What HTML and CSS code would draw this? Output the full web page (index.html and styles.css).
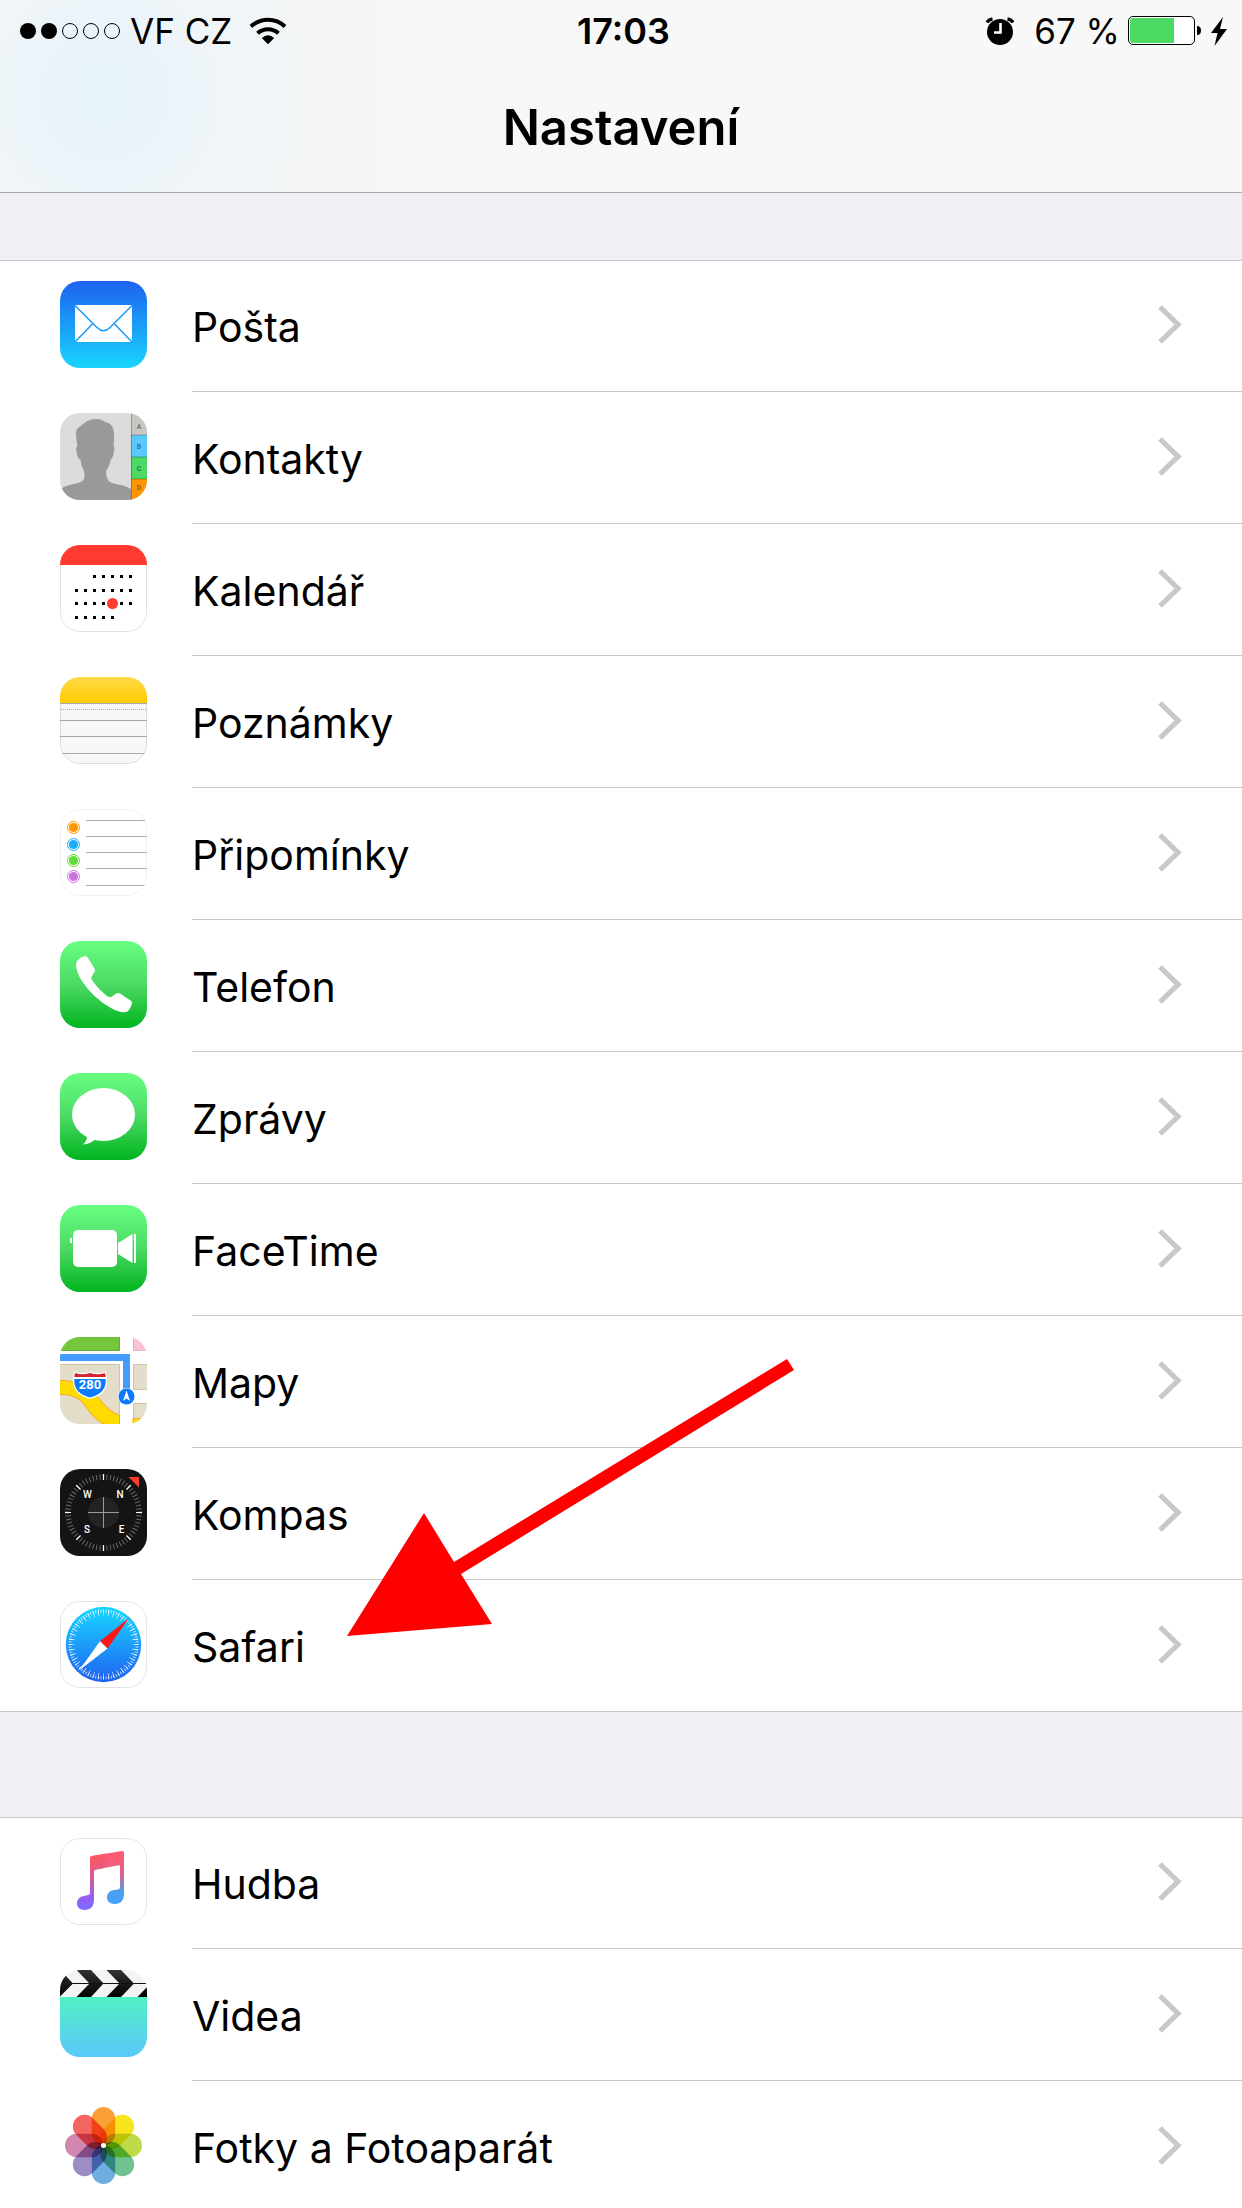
FILE: index.html
```html
<!DOCTYPE html>
<html lang="cs">
<head>
<meta charset="utf-8">
<meta name="viewport" content="width=device-width, initial-scale=1">
<title>Nastavení</title>
<link rel="stylesheet" href="styles.css">
</head>
<body>
<svg class="defs" width="0" height="0" aria-hidden="true">
  <defs>
    <linearGradient id="mail" x2="0" y2="1"><stop offset="0" stop-color="#1d62f0"/><stop offset="1" stop-color="#19d5fd"/></linearGradient>
    <linearGradient id="green" x2="0" y2="1"><stop offset="0" stop-color="#67ff81"/><stop offset=".5" stop-color="#4cd964"/><stop offset="1" stop-color="#01b41f"/></linearGradient>
    <linearGradient id="yellow" x2="0" y2="1"><stop offset="0" stop-color="#ffd94a"/><stop offset="1" stop-color="#ffcc00"/></linearGradient>
    <linearGradient id="safari" x2="0" y2="1"><stop offset="0" stop-color="#19d7ff"/><stop offset="1" stop-color="#1e62f0"/></linearGradient>
    <linearGradient id="noteTop" gradientUnits="userSpaceOnUse" x1="45" y1="16" x2="45" y2="66"><stop offset=".1" stop-color="#fb5c74" /><stop offset=".4" stop-color="#d9608f"/><stop offset=".75" stop-color="#4aa0ee"/><stop offset="1" stop-color="#42a1ff"/></linearGradient>
    <linearGradient id="noteLeft" gradientUnits="userSpaceOnUse" x1="28" y1="16" x2="32" y2="72"><stop offset=".05" stop-color="#ff5763"/><stop offset=".4" stop-color="#d95c93"/><stop offset=".8" stop-color="#9160fa"/><stop offset="1" stop-color="#7672ff"/></linearGradient>
    <linearGradient id="clapper" x2="0" y2="1"><stop offset="0" stop-color="#333"/><stop offset="1" stop-color="#000"/></linearGradient>
    <linearGradient id="slate" x2="0" y2="1"><stop offset="0" stop-color="#52f0c4"/><stop offset="1" stop-color="#5ac8fb"/></linearGradient>
    <symbol id="chevron" viewBox="0 0 24 39"><path d="M2 2 20 19.500 2 37" fill="none" stroke="#c7c7cc" stroke-width="5.200"/></symbol>
    <rect id="petal" x="31.800" y="5" width="23.400" height="38.500" rx="11.700"/>
  </defs>
</svg>

<header class="navbar">
  <div class="status">
    <div class="status-left">
      <svg width="100" height="16" viewBox="0 0 100 16" role="img" aria-label="Signál"><circle cx="8" cy="8" r="8"/><circle cx="29" cy="8" r="8"/><g fill="none" stroke="#000"><circle cx="50" cy="8" r="7.500"/><circle cx="71" cy="8" r="7.500"/><circle cx="92" cy="8" r="7.500"/></g></svg>
      <span class="carrier">VF CZ</span>
      <svg class="wifi" width="38" height="28" viewBox="0 0 38 28" role="img" aria-label="Wi-Fi"><g fill="none" stroke="#000" stroke-width="4"><path d="M2 9.500A24.500 24.500 0 0 1 36 9.500"/><path d="M8.500 16.300A15.500 15.500 0 0 1 29.500 16.300"/></g><path d="M12.800 21Q19 15.500 25.200 21L19 27.200Z"/></svg>
    </div>
    <time class="clock">17:03</time>
    <div class="status-right">
      <svg width="28" height="28" viewBox="0 0 28 28" role="img" aria-label="Budík"><circle cx="14" cy="15" r="13"/><g fill="none" stroke="#000" stroke-width="3.500"><path d="M1 5.500Q2.500 2.500 6.500 2"/><path d="M27 5.500Q25.500 2.500 21.500 2"/></g><path d="M14.500 6V15.500H8" fill="none" stroke="#fff" stroke-width="2.600"/></svg>
      <span class="percent">67 %</span>
      <svg width="74" height="30" viewBox="0 0 74 30" role="img" aria-label="Baterie"><rect x=".5" y=".5" width="66" height="28" rx="4.500" fill="#fff" stroke="#000"/><path d="M46 2V27H5Q2 27 2 24V5Q2 2 5 2Z" fill="#4cd964"/><path d="M69 10Q73 10 73 14.500T69 19Z"/></svg>
      <svg class="bolt" width="16" height="29" viewBox="0 0 16 29" role="img" aria-label="Nabíjení"><path d="M12 0 0 16H6.500L3.500 29 16 12H9Z"/></svg>
    </div>
  </div>
  <h1 class="title">Nastavení</h1>
</header>

<main class="settings">
  <ul class="group">
    <li class="row"><a class="link" href="#posta">
      <svg class="icon" viewBox="0 0 87 87" aria-hidden="true"><rect width="87" height="87" fill="url(#mail)"/><rect x="15" y="24" width="57" height="37" fill="#fff"/><g fill="none" stroke="#1f9cf7" stroke-width="1.600"><path d="M15 24.500 37 46.500Q43.500 53 50 46.500L72 24.500"/><path d="M15 61 32.500 43M72 61 54.500 43"/></g></svg>
      <span class="body"><span class="label">Pošta</span><svg class="chevron" aria-hidden="true"><use href="#chevron"/></svg></span></a></li>
    <li class="row"><a class="link" href="#kontakty">
      <svg class="icon" viewBox="0 0 87 87" aria-hidden="true"><rect width="87" height="87" fill="#dcdcdc"/><path d="M1 87V76C8 70 21 72 24 66Q25 61 24 58Q21 53 20.500 47Q17 46 16 35L17.500 33Q16 27 16 20C16 15 20 14 23 11Q29 6 36 6Q42 6 45 9Q51 10 53 15Q55 21 53.500 33L54.500 35Q53 46 50.500 47Q50 53 46 58Q46 64 48.500 68C53 72 64 71 71 76V87Z" fill="#999"/><rect x="71" width="16" height="22" fill="#c9c7c1"/><rect x="71" y="22" width="16" height="22" fill="#5ac8fa"/><rect x="71" y="44" width="16" height="22" fill="#4cd964"/><rect x="71" y="66" width="16" height="21" fill="#ff9500"/><path d="M71 22H87M71 44H87M71 66H87M71.500 0V87" stroke="#000" stroke-opacity=".25"/><g class="tab-text"><text x="79" y="16">A</text><text x="79" y="36">B</text><text x="79" y="58">C</text><text x="79" y="77">D</text></g></svg>
      <span class="body"><span class="label">Kontakty</span><svg class="chevron" aria-hidden="true"><use href="#chevron"/></svg></span></a></li>
    <li class="row"><a class="link" href="#kalendar">
      <svg class="icon" viewBox="0 0 87 87" aria-hidden="true"><rect x=".5" y=".5" width="86" height="86" rx="19.500" fill="#fff" stroke="#e0e0e0"/><rect width="87" height="20" fill="#ff3b30"/><g stroke="#000" stroke-width="3" stroke-dasharray="3 6"><path d="M33 31.500H72"/><path d="M15 45.500H72"/><path d="M15 58.500H72"/><path d="M15 72.500H54"/></g><circle cx="52.500" cy="58.500" r="5.500" fill="#ff3b30"/></svg>
      <span class="body"><span class="label">Kalendář</span><svg class="chevron" aria-hidden="true"><use href="#chevron"/></svg></span></a></li>
    <li class="row"><a class="link" href="#poznamky">
      <svg class="icon" viewBox="0 0 87 87" aria-hidden="true"><rect x=".5" y=".5" width="86" height="86" rx="19.500" fill="#f8f8f8" stroke="#dcdcdc"/><rect width="87" height="26" fill="url(#yellow)"/><path d="M0 26.500H87M0 43.500H87M0 59.500H87M2 76.500H85" stroke="#a8a8a8"/><path d="M1 32.500H87" stroke="#aaa" stroke-dasharray="1 1"/></svg>
      <span class="body"><span class="label">Poznámky</span><svg class="chevron" aria-hidden="true"><use href="#chevron"/></svg></span></a></li>
    <li class="row"><a class="link" href="#pripominky">
      <svg class="icon" viewBox="0 0 87 87" aria-hidden="true"><rect x=".5" y=".5" width="86" height="86" rx="19.500" fill="#fff" stroke="#f0f0f0"/><path d="M26 11.500H85M26 27.500H87M26 43.500H87M26 59.500H87M26 76.500H85" stroke="#acacac"/><g stroke-width="1" fill="none"><circle cx="13.500" cy="18.500" r="6" stroke="#ff9500"/><circle cx="13.500" cy="35.500" r="6" stroke="#1badf8"/><circle cx="13.500" cy="51.500" r="6" stroke="#63da38"/><circle cx="13.500" cy="67.500" r="6" stroke="#cc73e1"/></g><circle cx="13.500" cy="18.500" r="4.600" fill="#ff9500"/><circle cx="13.500" cy="35.500" r="4.600" fill="#1badf8"/><circle cx="13.500" cy="51.500" r="4.600" fill="#63da38"/><circle cx="13.500" cy="67.500" r="4.600" fill="#cc73e1"/></svg>
      <span class="body"><span class="label">Připomínky</span><svg class="chevron" aria-hidden="true"><use href="#chevron"/></svg></span></a></li>
    <li class="row"><a class="link" href="#telefon">
      <svg class="icon" viewBox="0 0 87 87" aria-hidden="true"><rect width="87" height="87" fill="url(#green)"/><path d="M16 23Q17 17 25 15Q27 15 28 17L34.500 27.500Q35.500 29 34.500 31L31.500 36Q31 38 32 39Q38 48 47 55Q50 57 52 55.500L56 52.500Q58 51.500 60 52.500L70.500 59.500Q73 61 71.500 64Q69.500 70 66 71Q59 72 51 67Q33 57 22 40Q16 31 16 23Z" fill="#fff"/></svg>
      <span class="body"><span class="label">Telefon</span><svg class="chevron" aria-hidden="true"><use href="#chevron"/></svg></span></a></li>
    <li class="row"><a class="link" href="#zpravy">
      <svg class="icon" viewBox="0 0 87 87" aria-hidden="true"><rect width="87" height="87" fill="url(#green)"/><ellipse cx="43.500" cy="41.500" rx="31.500" ry="26.500" fill="#fff"/><path d="M26 61Q29 66 23 71.500Q30 71 36 66Z" fill="#fff"/></svg>
      <span class="body"><span class="label">Zprávy</span><svg class="chevron" aria-hidden="true"><use href="#chevron"/></svg></span></a></li>
    <li class="row"><a class="link" href="#facetime">
      <svg class="icon" viewBox="0 0 87 87" aria-hidden="true"><rect width="87" height="87" fill="url(#green)"/><g fill="#fff"><rect x="13" y="25" width="44" height="37" rx="5"/><path d="M58 38 72.500 29V58L58 49Z"/><rect x="74" y="29" width="2" height="29"/><rect x="10" y="33" width="2" height="5"/></g></svg>
      <span class="body"><span class="label">FaceTime</span><svg class="chevron" aria-hidden="true"><use href="#chevron"/></svg></span></a></li>
    <li class="row"><a class="link" href="#mapy">
      <svg class="icon" viewBox="0 0 87 87" aria-hidden="true"><rect width="87" height="87" fill="#fff"/><g stroke="#cbc5ad"><path d="M-1 27.500H59.500V88H-1Z" fill="#e4ddca"/><path d="M73.500 27.500H88V52.500H73.500ZM73.500 66.500H88V88H73.500Z" fill="#e4ddca"/></g><path d="M-1 0H59.500V13.500H-1Z" fill="#76c63c" stroke="#5fae36"/><path d="M73.500-1H88V13.500H73.500Z" fill="#fbc3d1" stroke="#e6b4bf"/><path d="M-1 43.500C22 43 33 54 42 65Q50 75 59.500 78.500V88H46C33 83 27 70 20 63Q12 57-1 57.500ZM73 81.500Q78 82 82 81.500H87V84L80 88H73Z" fill="#ffdc00" stroke="#f5a623"/><path d="M0 20.500H66.500V55" fill="none" stroke="#439aff" stroke-width="7"/><path d="M15 34.500Q22 37.500 30 34.500Q38 37.500 45 34.500Q48 39 47 45Q46 58 30 62Q14 58 13 45Q12 39 15 34.500Z" fill="#fff"/><path d="M15.500 36Q22 38.500 30 36Q38 38.500 44.500 36Q46 38 45.700 40H14.300Q14 38 15.500 36Z" fill="#d5232f"/><path d="M14.300 42H45.700Q47 56 30 60.500Q13 56 14.300 42Z" fill="#0b7bff"/><text class="shield-text" x="30" y="52">280</text><circle cx="66.500" cy="59.500" r="8.800" fill="#fff" opacity=".7"/><circle cx="66.500" cy="59.500" r="8" fill="#0b7bff"/><path d="M66.500 53.500 70 64 66.500 61.500 63 64Z" fill="#fff"/></svg>
      <span class="body"><span class="label">Mapy</span><svg class="chevron" aria-hidden="true"><use href="#chevron"/></svg></span></a></li>
    <li class="row"><a class="link" href="#kompas">
      <svg class="icon" viewBox="0 0 87 87" aria-hidden="true"><rect width="87" height="87" fill="#141414"/><circle cx="43.500" cy="43.500" r="15.500" fill="#232323"/><path d="M43.500 28V59M28 43.500H59" stroke="#9a9a9e"/><g fill="none"><circle cx="43.500" cy="43.500" r="35.500" stroke="#777" stroke-width="5.500" pathLength="64" stroke-dasharray=".24 .76" stroke-dashoffset=".12"/><circle cx="43.500" cy="43.500" r="35.500" stroke="#fff" stroke-width="6" pathLength="80" stroke-dasharray=".46 9.540" stroke-dashoffset=".23"/></g><path d="M68.500 8H79V18.500Z" fill="#ff3b30"/><g class="compass-text"><text x="27.500" y="29">W</text><text x="60" y="29">N</text><text x="27" y="64">S</text><text x="61.500" y="64">E</text></g></svg>
      <span class="body"><span class="label">Kompas</span><svg class="chevron" aria-hidden="true"><use href="#chevron"/></svg></span></a></li>
    <li class="row"><a class="link" href="#safari">
      <svg class="icon" viewBox="0 0 87 87" aria-hidden="true"><rect x=".5" y=".5" width="86" height="86" rx="19.500" fill="#fff" stroke="#e2e2e2"/><circle cx="43.500" cy="43.500" r="37.700" fill="url(#safari)"/><g fill="none" stroke="#fff"><circle cx="43.500" cy="43.500" r="33.500" stroke-width="3" stroke-opacity=".8" pathLength="80" stroke-dasharray=".32 .68" stroke-dashoffset=".16"/><circle cx="43.500" cy="43.500" r="32" stroke-width="6" stroke-opacity=".8" pathLength="40" stroke-dasharray=".16 .84" stroke-dashoffset=".08"/></g><path d="M69 17 40 40.300 47.500 47.500Z" fill="#ff1515"/><path d="M19 69.500 40 40.300 47.500 47.500Z" fill="#fff"/></svg>
      <span class="body"><span class="label">Safari</span><svg class="chevron" aria-hidden="true"><use href="#chevron"/></svg></span></a>
      <svg class="pointer" width="448" height="278" viewBox="0 0 448 278" aria-hidden="true"><path d="M0 278 77 155 107 204 440 1 447 12 114 216 145 266Z" fill="#f00"/></svg>
    </li>
  </ul>

  <ul class="group">
    <li class="row"><a class="link" href="#hudba">
      <svg class="icon" viewBox="0 0 87 87" aria-hidden="true"><rect x=".5" y=".5" width="86" height="86" rx="19.500" fill="#fff" stroke="#e2e2e2"/><path d="M30 32V20Q30 18.500 32 18L62 13Q64 12.700 64 15V55Q64 66 54.500 66Q47 66 47 59.500Q47 53 54 52L58 51.500Q60 51 60 49V28.500Q60 27 58.500 27.300L34 32Z" fill="url(#noteTop)"/><path d="M30 20Q30 18.500 32 18L46 15.500 44 30 35.500 31.600Q34 32 34 33.500V61Q34 72 24.500 72Q17 72 17 65.500Q17 59 24 58L28 57Q30 56.500 30 55Z" fill="url(#noteLeft)"/></svg>
      <span class="body"><span class="label">Hudba</span><svg class="chevron" aria-hidden="true"><use href="#chevron"/></svg></span></a></li>
    <li class="row"><a class="link" href="#videa">
      <svg class="icon" viewBox="0 0 87 87" aria-hidden="true"><rect width="87" height="27" fill="#f4f4f4"/><path d="M5 5 13 13.500 0 26.500V13ZM16.500 0H31L43.500 13.500 31 27H16.500L29.500 13.500ZM46.500 0H61L74 13.500 61 27H46.500L59.500 13.500ZM77.500 27 87 17V27Z" fill="url(#clapper)"/><path d="M12 13.500H86" stroke="#111"/><rect y="27" width="87" height="60" fill="url(#slate)"/></svg>
      <span class="body"><span class="label">Videa</span><svg class="chevron" aria-hidden="true"><use href="#chevron"/></svg></span></a></li>
    <li class="row"><a class="link" href="#fotky">
      <svg class="icon photos" viewBox="0 0 87 87" aria-hidden="true"><use href="#petal" fill="#fba036"/><use href="#petal" fill="#f8e41c" transform="rotate(45 43.500 43.500)"/><use href="#petal" fill="#bfdc48" transform="rotate(90 43.500 43.500)"/><use href="#petal" fill="#6fc391" transform="rotate(135 43.500 43.500)"/><use href="#petal" fill="#6eaee0" transform="rotate(180 43.500 43.500)"/><use href="#petal" fill="#9c8dc5" transform="rotate(225 43.500 43.500)"/><use href="#petal" fill="#d288ae" transform="rotate(270 43.500 43.500)"/><use href="#petal" fill="#f5655f" transform="rotate(315 43.500 43.500)"/><circle class="core" cx="43.500" cy="43.500" r="2.500" fill="#fff"/></svg>
      <span class="body"><span class="label">Fotky a Fotoaparát</span><svg class="chevron" aria-hidden="true"><use href="#chevron"/></svg></span></a></li>
  </ul>
</main>
</body>
</html>
```
FILE: styles.css
```css
* {
  box-sizing: border-box;
}

html {
  scrollbar-width: none;
}

body {
  margin: 0;
  background: #efeff4;
  color: #000;
  font-family: Inter, "Liberation Sans", sans-serif;
  font-size: 41px;
}

svg {
  display: block;
  flex: none;
}

.defs {
  position: absolute;
}

.navbar {
  border-bottom: 1px solid #a7a7ab;
  background:
    radial-gradient(circle at 105px 95px, #e7f3fa 0, #ebf3fa 60px, #eff5f8 120px, rgba(245, 246, 247, 0) 240px),
    linear-gradient(90deg, #f3f7f9, #f5f5f5 240px, #f8f8f8 700px);
}

.status {
  display: grid;
  grid-template-columns: 1fr auto 1fr;
  align-items: center;
  height: 62px;
  padding: 0 15px 0 20px;
  font-size: 35px;
  line-height: 62px;
}

.status-left,
.status-right {
  display: flex;
  align-items: center;
}

.status-right {
  justify-content: flex-end;
}

.carrier {
  margin: 0 17px 0 10px;
}

.clock {
  font-size: 36px;
  font-weight: 600;
}

.percent {
  margin: 0 8px 0 20px;
}

.bolt {
  margin-left: 9px;
}

.title {
  margin: 0;
  padding-top: 2px;
  font-size: 49px;
  font-weight: 600;
  line-height: 128px;
  text-align: center;
}

.settings {
  display: flex;
  flex-direction: column;
  gap: 105px;
  padding-top: 67px;
}

.group {
  margin: 0;
  padding: 0;
  list-style: none;
  background: #fff;
  box-shadow: inset 0 1px #c8c7cc, inset 0 -1px #c8c7cc;
}

.row {
  position: relative;
}

.link {
  display: flex;
  align-items: flex-start;
  gap: 45px;
  padding-left: 60px;
  color: inherit;
  text-decoration: none;
}

.icon {
  width: 87px;
  height: 87px;
  margin-top: 21px;
  border-radius: 20px;
  overflow: hidden;
}

.body {
  display: flex;
  flex: 1;
  align-items: center;
  justify-content: space-between;
  min-height: 132px;
  padding-right: 60px;
  padding-bottom: 2px;
  border-bottom: 1px solid #c8c7cc;
}

.row:last-child .body {
  border-bottom-color: transparent;
}

.label {
  padding-top: 5px;
  line-height: 60px;
}

.chevron {
  width: 24px;
  height: 39px;
}

.photos {
  isolation: isolate;
}

.photos use {
  mix-blend-mode: multiply;
}

.tab-text,
.shield-text,
.compass-text {
  font-family: Roboto, sans-serif;
  font-weight: 700;
  text-anchor: middle;
}

.tab-text {
  font-size: 7px;
  fill: rgba(0, 0, 0, 0.45);
}

.shield-text {
  font-size: 13px;
  fill: #fff;
}

.compass-text {
  font-size: 10px;
  font-weight: 500;
  fill: #fff;
}

/* Callout arrow drawn over the list, aimed at its row */
.pointer {
  position: absolute;
  left: 347px;
  bottom: 76px;
  pointer-events: none;
}
```
